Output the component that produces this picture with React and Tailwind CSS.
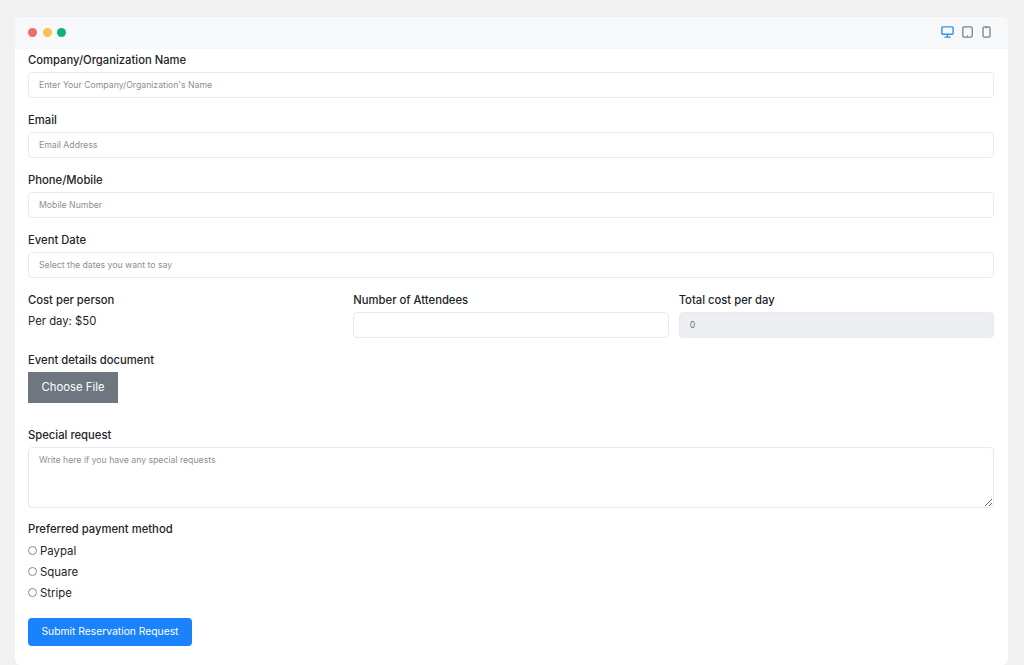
import React from "react";

const fields = [
  { label: "Company/Organization Name", placeholder: "Enter Your Company/Organization's Name" },
  { label: "Email", placeholder: "Email Address" },
  { label: "Phone/Mobile", placeholder: "Mobile Number" },
  { label: "Event Date", placeholder: "Select the dates you want to say" },
];

const inputClass =
  "block w-full h-[26px] px-[10px] pb-[1px] rounded-[4px] border border-[#e8eaed] text-[8.7px] text-[#6b7280] outline-none placeholder:text-[#8a8f96]";
const labelClass = "block h-[22px] text-[11.25px] leading-[21px] font-medium text-[#212529]";

const DotRow = () => (
  <div className="flex items-center gap-[5.5px] -mt-[1px]">
    <span className="w-[9px] h-[9px] rounded-full bg-[#f16a6c]" />
    <span className="w-[9px] h-[9px] rounded-full bg-[#fbc04f]" />
    <span className="w-[9px] h-[9px] rounded-full bg-[#0bb27a]" />
  </div>
);

const DeviceIcons = () => (
  <div className="flex items-center gap-[8px] -mt-[2px]">
    <svg width="13" height="12" viewBox="0 0 13 12" fill="none" stroke="#3b8de0" strokeWidth="1.4">
      <rect x="0.9" y="0.9" width="11.2" height="7.4" rx="1" />
      <path d="M6.5 8.3v2.6M3.4 11.1h6.2" />
    </svg>
    <svg width="11" height="12" viewBox="0 0 11 12" fill="none" stroke="#7b7f85" strokeWidth="1.3">
      <rect x="0.8" y="0.8" width="9.4" height="10.4" rx="1.4" />
      <path d="M5 9.8h1" />
    </svg>
    <svg width="9" height="12" viewBox="0 0 9 12" fill="none" stroke="#7b7f85" strokeWidth="1.3" className="ml-[1px]">
      <rect x="1" y="0.8" width="7" height="10.4" rx="1.4" />
      <path d="M3.6 1.6h1.8" />
    </svg>
  </div>
);

const App = () => {
  return (
    <div className="h-[665px] overflow-hidden bg-[#f1f1f1] pt-[17px] pl-[15px] pr-[16px] font-['Inter','Liberation_Sans',sans-serif]">
      <div className="h-[648px] rounded-[6px] bg-white overflow-hidden">
        <div className="h-[32px] flex items-center justify-between pl-[13px] pr-[17px] bg-[#f6f8fa]">
          <DotRow />
          <DeviceIcons />
        </div>

        <form className="pl-[13px] pr-[14px] pt-[1px]">
          {fields.map((field) => (
            <div key={field.label} className="h-[60px]">
              <label className={labelClass}>{field.label}</label>
              <input className={inputClass + " bg-white"} placeholder={field.placeholder} />
            </div>
          ))}

          <div className="grid grid-cols-3 gap-[10px] h-[60px]">
            <div>
              <label className={labelClass}>Cost per person</label>
              <p className="text-[11.3px] leading-[20px] -mt-[1px] text-[#212529]">Per day: $50</p>
            </div>
            <div>
              <label className={labelClass}>Number of Attendees</label>
              <input className={inputClass + " bg-white"} />
            </div>
            <div>
              <label className={labelClass}>Total cost per day</label>
              <input className={inputClass + " bg-[#eceef1]"} value="0" readOnly />
            </div>
          </div>

          <div className="h-[75px]">
            <label className={labelClass}>Event details document</label>
            <button type="button" className="block w-[90px] h-[31px] bg-[#6f767f] text-[11.3px] text-white">
              Choose File
            </button>
          </div>

          <div className="h-[94px]">
            <label className={labelClass}>Special request</label>
            <textarea
              className="block w-full h-[61px] px-[10px] py-[6px] rounded-[4px] border border-[#e8eaed] text-[8.7px] outline-none placeholder:text-[#8a8f96]"
              placeholder="Write here if you have any special requests"
            />
          </div>

          <label className={labelClass}>Preferred payment method</label>
          <div className="flex flex-col">
            {["Paypal", "Square", "Stripe"].map((method) => (
              <label key={method} className="flex items-center h-[21px] text-[11.4px] text-[#212529]">
                <input
                  type="radio"
                  name="payment"
                  className="appearance-none w-[9px] h-[9px] rounded-full border border-[#8a8a8a] bg-white m-0 mr-[3px] -mt-[2px]"
                />
                {method}
              </label>
            ))}
          </div>

          <button
            type="button"
            className="block mt-[14px] w-[164px] h-[28px] rounded-[4px] bg-[#1a82fb] text-[10.3px] text-white"
          >
            Submit Reservation Request
          </button>
        </form>
      </div>
    </div>
  );
};

export default App;
